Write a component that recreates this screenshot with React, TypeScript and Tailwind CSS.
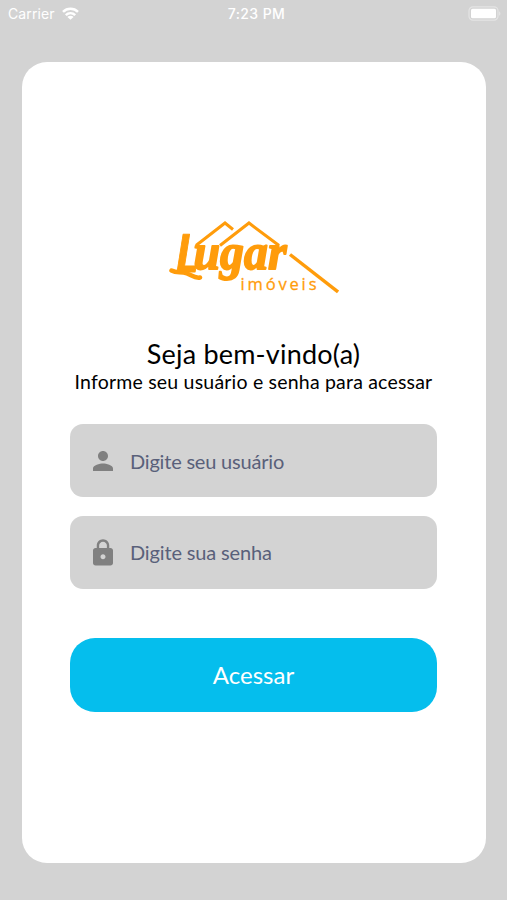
import React, { useState } from 'react';
import { MdLock, MdPerson } from 'react-icons/md';

function StatusBar() {
  return (
    <header className="grid grid-cols-3 items-center h-7 pl-2 pr-1.5 text-white font-['Inter',sans-serif]">
      <div className="flex items-center gap-[7px]">
        <span className="text-[14px] leading-7 tracking-[0.1px]">Carrier</span>
        <svg className="w-[17px] h-[13px] -mt-0.5" viewBox="0 0 17 13" fill="none" stroke="currentColor" strokeWidth="2.5">
          <path d="M1 4.8C5.2 0.7 11.8 0.7 16 4.8" />
          <path d="M3.8 8.1C6.5 5.5 10.5 5.5 13.2 8.1" />
          <path d="M8.5 12.8L5.4 9.9C7 8.4 10 8.4 11.6 9.9Z" fill="currentColor" stroke="none" />
        </svg>
      </div>
      <span className="pl-1 text-center text-[14px] leading-7 font-medium tracking-[0.4px] whitespace-nowrap">7:23 PM</span>
      <svg className="justify-self-end w-[33px] h-[15px] -mt-0.5" viewBox="0 0 33 15" fill="none">
        <rect x="1" y="0.8" width="29" height="13.4" rx="4" stroke="white" strokeOpacity="0.4" strokeWidth="1.2" />
        <rect x="3" y="2.8" width="25" height="9.4" rx="1.5" fill="white" />
        <path d="M31.2 5.2C32.8 6 32.8 9 31.2 9.8Z" fill="white" fillOpacity="0.45" />
      </svg>
    </header>
  );
}

function Logo() {
  return (
    <svg className="w-[170px] h-[76px]" viewBox="0 0 170 76" fill="none">
      {/* Roof lines */}
      <g stroke="#ff9c0b" strokeWidth="3">
        <path d="M27 25.5L56 3L64 9.5" />
        <path d="M51 25.5L80 3L110 25.5" />
        <path d="M121 34.5L169 72" strokeWidth="3.4" />
      </g>
      {/* Flourish under the first letter */}
      <path d="M2.5 50.5C8 53.5 12 51 18 53.5C23 55.5 26 58.5 31 57.5" stroke="#ff9c0b" strokeWidth="4.5" strokeLinecap="round" />
      <g fill="#ff9c0b" stroke="#ff9c0b" strokeLinejoin="round">
        <text
          transform="translate(6.5 51.5) skewX(-3)"
          className="font-['Lato',sans-serif] font-black italic text-[52px]"
          textLength="22"
          lengthAdjust="spacingAndGlyphs"
        >
          L
        </text>
        <text
          x="24.5"
          y="49"
          textLength="93"
          lengthAdjust="spacingAndGlyphs"
          strokeWidth="1.8"
          className="font-['Liberation_Serif',serif] font-bold italic text-[50px]"
        >
          ugar
        </text>
      </g>
      <text
        x="71.5"
        y="70"
        textLength="76"
        className="font-['Open_Sans',sans-serif] text-[16.5px]"
        fill="#ff9c0b"
        stroke="#ff9c0b"
        strokeWidth="0.3"
      >
        imóveis
      </text>
    </svg>
  );
}

export default function App() {
  const [usuario, setUsuario] = useState<string>('');
  const [senha, setSenha] = useState<string>('');

  return (
    <div className="w-full h-screen flex flex-col bg-[#d3d3d3] font-['Lato',sans-serif] overflow-hidden">
      <StatusBar />

      <main className="mt-[34px] ml-[22px] mr-[21px] pr-px h-[801px] shrink-0 rounded-[25px] bg-white flex flex-col items-center">
        <div className="mt-[158px]">
          <Logo />
        </div>

        <h1 className="mt-[42px] text-[27px] leading-8 tracking-[0.2px] text-black whitespace-nowrap">Seja bem-vindo(a)</h1>
        <p className="text-[19.5px] leading-6 tracking-[0.2px] text-black whitespace-nowrap">Informe seu usuário e senha para acessar</p>

        <form className="mt-[30px] w-[367px] flex flex-col" onSubmit={(e) => e.preventDefault()}>
          <label className="h-[73px] rounded-[13px] bg-[#d3d3d3] flex items-center pl-[18px]">
            <MdPerson className="size-[30px] shrink-0 text-[#808080]" />
            <input
              type="text"
              value={usuario}
              onChange={(e) => setUsuario(e.target.value)}
              placeholder="Digite seu usuário"
              className="ml-3 w-full bg-transparent outline-none text-[20px] tracking-[-0.2px] text-black placeholder:text-[#59607a]"
            />
          </label>

          <label className="mt-[19px] h-[73px] rounded-[13px] bg-[#d3d3d3] flex items-center pl-[18px]">
            <MdLock className="size-[30px] shrink-0 text-[#808080]" />
            <input
              type="password"
              value={senha}
              onChange={(e) => setSenha(e.target.value)}
              placeholder="Digite sua senha"
              className="ml-3 mb-0.5 w-full bg-transparent outline-none text-[20px] tracking-[-0.15px] text-black placeholder:text-[#59607a]"
            />
          </label>

          <button
            type="submit"
            className="mt-[49px] h-[74px] rounded-[25px] bg-[#05beed] text-white text-[24px] cursor-pointer"
          >
            Acessar
          </button>
        </form>
      </main>
    </div>
  );
}
